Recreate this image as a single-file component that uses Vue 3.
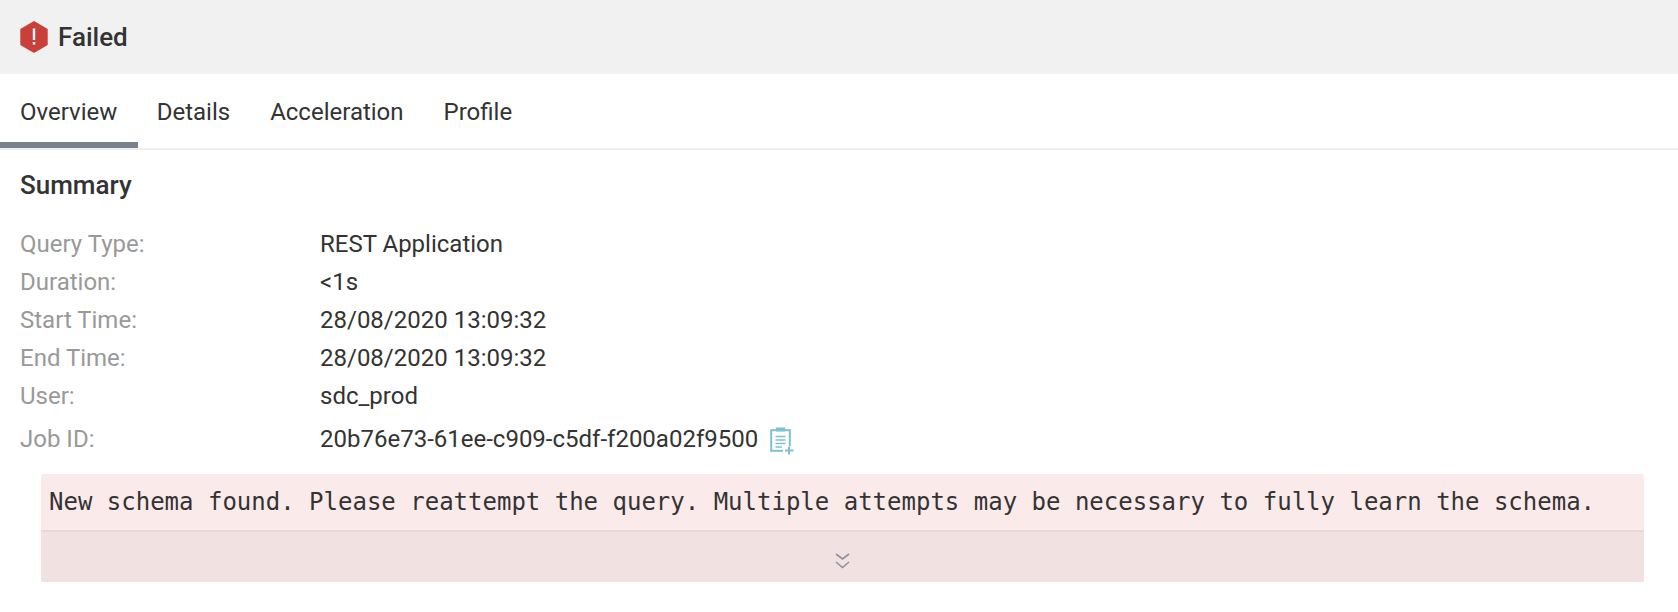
<script setup>
const tabs = ['Overview', 'Details', 'Acceleration', 'Profile']
const rows = [
  { label: 'Query Type:', value: 'REST Application' },
  { label: 'Duration:', value: '<1s' },
  { label: 'Start Time:', value: '28/08/2020 13:09:32' },
  { label: 'End Time:', value: '28/08/2020 13:09:32' },
  { label: 'User:', value: 'sdc_prod' }
]
</script>

<template>
  <div class="page">
    <header class="status">
      <svg class="status-icon" width="28" height="32" viewBox="0 0 28 32">
        <path d="M14 0 L27.7 8 V24 L14 32 L0.3 24 V8 Z" fill="#ca3f39" />
        <rect x="12.8" y="7.5" width="2.4" height="11.5" fill="#fff" />
        <rect x="12.8" y="21" width="2.4" height="2.6" fill="#fff" />
      </svg>
      <span class="status-text">Failed</span>
    </header>

    <nav class="tabs">
      <div v-for="(tab, i) in tabs" :key="tab" class="tab" :class="{ active: i === 0 }">{{ tab }}</div>
    </nav>

    <section class="summary">
      <h2 class="title">Summary</h2>
      <div v-for="row in rows" :key="row.label" class="row">
        <div class="label">{{ row.label }}</div>
        <div class="value">{{ row.value }}</div>
      </div>
      <div class="row job">
        <div class="label">Job ID:</div>
        <div class="value">20b76e73-61ee-c909-c5df-f200a02f9500</div>
        <svg class="copy" width="24" height="28" viewBox="0 0 24 28" fill="none">
          <rect x="1.2" y="3.2" width="18.6" height="20.6" stroke="#7fc0d2" stroke-width="2" />
          <rect x="6" y="0.5" width="9" height="4" fill="#7fc0d2" />
          <path d="M5.5 9.5H15.5M5.5 13H15.5M5.5 16.5H15.5M5.5 20H12" stroke="#7fc0d2" stroke-width="1.3" />
          <rect x="13" y="19" width="11" height="9" fill="#fff" />
          <path d="M19 19.5V27.5M15 23.5H23.5" stroke="#7fc0d2" stroke-width="2" />
        </svg>
      </div>
    </section>

    <div class="error">
      <div class="error-msg">New schema found. Please reattempt the query. Multiple attempts may be necessary to fully learn the schema.</div>
      <div class="error-more">
        <svg width="15" height="16" viewBox="0 0 15 16" fill="none" stroke="#8b92a0" stroke-width="1.6">
          <path d="M1 1L7.5 6L14 1" />
          <path d="M1 9L7.5 14.5L14 9" />
        </svg>
      </div>
    </div>
  </div>
</template>

<style scoped>
.page {
  width: 1678px;
  height: 612px;
  overflow: hidden;
  background: #fff;
  font-family: Roboto, "Liberation Sans", sans-serif;
  color: #333;
}

/* top status bar */
.status {
  height: 74px;
  background: #f1f1f1;
  display: flex;
  align-items: center;
  padding-left: 20px;
  gap: 10px;
}
.status-text {
  font-size: 26px;
  font-weight: 500;
}

/* tabs */
.tabs {
  height: 76px;
  box-sizing: border-box;
  display: flex;
  border-bottom: 2px solid #eeeeee;
}
.tab {
  padding: 0 20px;
  line-height: 76px;
  font-size: 24px;
  height: 74px;
  box-sizing: border-box;
}
.tab.active {
  border-bottom: 6px solid #7a828e;
  padding-right: 20.8px;
  margin-right: -1.4px;
}

/* summary */
.summary {
  padding: 0 20px;
}
.title {
  margin: 0;
  padding-top: 17px;
  height: 75px;
  box-sizing: border-box;
  font-size: 26px;
  line-height: 36px;
  font-weight: 500;
}
.row {
  display: flex;
  align-items: center;
  height: 38px;
  font-size: 24px;
}
.row.job {
  height: 44px;
  margin-top: 2px;
}
.label {
  width: 300px;
  color: #999;
}
.value {
  color: #333;
}
.copy {
  margin-left: 12px;
  margin-top: 4px;
}

/* error box */
.error {
  margin: 13px 34px 0 40.5px;
  border-radius: 2px;
  overflow: hidden;
  background: #fbeaea;
}
.error-msg {
  height: 56px;
  line-height: 56px;
  padding-left: 8.5px;
  font-family: "DejaVu Sans Mono", "Liberation Mono", monospace;
  font-size: 24px;
  white-space: nowrap;
  color: #333;
}
.error-more {
  height: 52px;
  box-sizing: border-box;
  border-top: 2px solid #e9d8d8;
  background: #f1e1e1;
  padding-top: 7px;
  display: flex;
  align-items: center;
  justify-content: center;
}
</style>
